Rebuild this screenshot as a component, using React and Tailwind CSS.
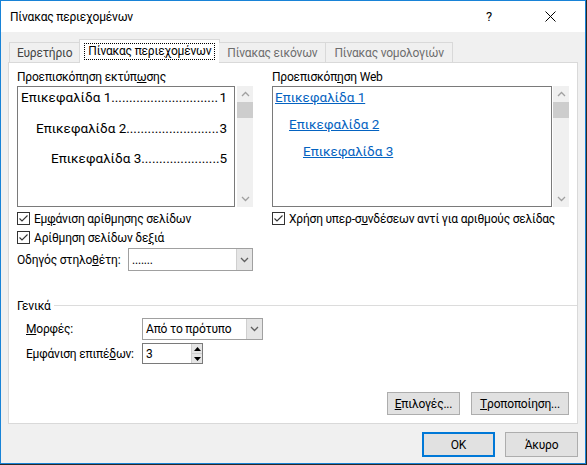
import React from "react";

const F = { fontFamily: 'Roboto, "Noto Sans", "Liberation Sans", sans-serif' };

function Check({ className = "" }) {
  return (
    <div className={"w-[13px] h-[13px] border border-[#333333] bg-white flex items-center justify-center shrink-0 " + className}>
      <svg width="11" height="11" viewBox="0 0 11 11">
        <path d="M1.5 5.5 L4 8 L9.5 2.5" fill="none" stroke="#333" strokeWidth="1.1" />
      </svg>
    </div>
  );
}

function Chevron({ up = false, color = "#a0a0a0" }) {
  return (
    <svg width="9" height="6" viewBox="0 0 9 6">
      <path d={up ? "M1 5 L4.5 1.5 L8 5" : "M1 1 L4.5 4.5 L8 1"} fill="none" stroke={color} strokeWidth="1.3" />
    </svg>
  );
}

function VScroll() {
  return (
    <div className="w-[16px] h-[121px] bg-[#f0f0f0] flex flex-col items-center shrink-0">
      <div className="h-[16px] w-full flex items-center justify-center"><Chevron up /></div>
      <div className="h-[16px] w-full bg-[#cdcdcd]" />
      <div className="flex-1" />
      <div className="h-[16px] w-full flex items-center justify-center"><Chevron /></div>
    </div>
  );
}

function Combo({ w, text, h = "h-[23px]" }) {
  return (
    <div className={"flex border border-[#a0a0a0] bg-white " + h} style={{ width: w }}>
      <div className="flex-1 flex items-center pl-[3px] text-[12px]">{text}</div>
      <div className="w-[16px] border-l border-[#cfcfcf] bg-[#e5e5e5] flex items-center justify-center">
        <Chevron color="#606060" />
      </div>
    </div>
  );
}

function Btn({ children, w = "w-[73px]", className = "" }) {
  return (
    <div className={"h-[23px] border border-[#adadad] bg-[#e1e1e1] flex items-center justify-center text-[12px] " + w + " " + className}>
      {children}
    </div>
  );
}

function Leader({ text, dots, num, pl }) {
  return (
    <div className="flex items-end justify-between text-[13.5px] leading-[18px] tracking-normal" style={{ paddingLeft: pl }}>
      <span className="whitespace-nowrap">{text}{dots}</span>
      <span>{num}</span>
    </div>
  );
}

export default function App() {
  return (
    <div className="w-[587px] h-[465px] border-r border-b border-[#2a2a2a] text-black tracking-[-0.2px]" style={F}>
      <div className="w-[586px] h-[464px] border border-[#1883d7] bg-[#f0f0f0] flex flex-col">
        {/* title bar */}
        <div className="h-[31px] bg-white flex items-center pl-[9px] text-[12px]">
          <span className="flex-1">Πίνακας περιεχομένων</span>
          <span className="text-[13px] mr-[53px]">?</span>
          <svg width="11" height="11" viewBox="0 0 11 11" className="mr-[29px]">
            <path d="M0.5 0.5 L10.5 10.5 M10.5 0.5 L0.5 10.5" stroke="#000" strokeWidth="1" />
          </svg>
        </div>

        <div className="px-[7px] flex flex-col">
          {/* tabs */}
          <div className="flex items-end h-[30px] pt-[7px] pl-[1px] text-[12px] relative z-10 whitespace-nowrap">
            <div className="h-[20px] px-[7px] border border-b-0 border-[#d9d9d9] bg-[#f0f0f0] text-[#444] flex items-center">Ευρετήριο</div>
            <div className="h-[24px] px-[4px] border border-b-0 border-[#d9d9d9] bg-white -mx-[1px] flex items-center -mb-[1px] pb-[1px]">
              <span className="border border-dotted border-black px-[3px] leading-[15px]">Πίνακας περιε<u>χ</u>ομένων</span>
            </div>
            <div className="h-[20px] px-[8px] border border-b-0 border-l-0 border-[#d9d9d9] bg-[#f0f0f0] text-[#6d6d6d] flex items-center">Πίνακας εικόνων</div>
            <div className="h-[20px] px-[8px] border border-b-0 border-l-0 border-[#d9d9d9] bg-[#f0f0f0] text-[#6d6d6d] flex items-center">Πίνακας νομολογιών</div>
          </div>

          {/* panel */}
          <div className="h-[362px] border border-[#d9d9d9] bg-white flex flex-col px-[8px] text-[12px] whitespace-nowrap">
            <div className="flex pt-[7px] h-[231px]">
              {/* left column */}
              <div className="w-[236px] flex flex-col">
                <div className="h-[16px] leading-[15px]">Προεπισκόπηση εκτύπ<u>ω</u>σης</div>
                <div className="flex gap-[2px]">
                  <div className="w-[218px] h-[121px] border border-[#7a7a7a] pt-[1px] pl-[3px] pr-[7px] flex flex-col overflow-hidden">
                    <Leader text="Επικεφαλίδα 1" dots={".".repeat(30)} num="1" pl={0} />
                    <div className="h-[13px]" />
                    <Leader text="Επικεφαλίδα 2" dots={".".repeat(26)} num="3" pl={15} />
                    <div className="h-[12px]" />
                    <Leader text="Επικεφαλίδα 3" dots={".".repeat(22)} num="5" pl={30} />
                  </div>
                  <VScroll />
                </div>
                <div className="flex items-center h-[13px] mt-[5px]">
                  <Check />
                  <span className="ml-[4px]">Εμ<u>φ</u>άνιση αρίθμησης σελίδων</span>
                </div>
                <div className="flex items-center h-[13px] mt-[6px]">
                  <Check />
                  <span className="ml-[4px]">Αρίθμηση σελίδων δε<u>ξ</u>ιά</span>
                </div>
                <div className="flex items-center mt-[4px]">
                  <span className="w-[111px]">Οδηγός στηλο<u>θ</u>έτη:</span>
                  <Combo w="125px" text="......." />
                </div>
              </div>
              {/* divider */}
              <div className="w-[1px] bg-[#a0a0a0] ml-[10px] mr-[9px]" />
              {/* right column */}
              <div className="flex-1 flex flex-col">
                <div className="h-[16px] leading-[15px]">Προεπισκόπ<u>η</u>ση Web</div>
                <div className="flex gap-[1px]">
                  <div className="w-[280px] h-[121px] border border-[#7a7a7a] pt-[1px] pl-[2px] flex flex-col text-[13.5px] leading-[18px] tracking-normal text-[#0563c1]">
                    <span className="underline self-start">Επικεφαλίδα 1</span>
                    <span className="underline ml-[14px] mt-[9px] self-start">Επικεφαλίδα 2</span>
                    <span className="underline ml-[28px] mt-[9px] self-start">Επικεφαλίδα 3</span>
                  </div>
                  <VScroll />
                </div>
                <div className="flex items-center h-[13px] mt-[5px]">
                  <Check />
                  <span className="ml-[4px]">Χρήση υπερ-σ<u>υ</u>νδέσεων αντί για αριθμούς σελίδας</span>
                </div>
              </div>
            </div>

            {/* general */}
            <div className="flex items-center mt-[4px] h-[15px] -mr-[8px]">
              <span>Γενικά</span>
              <div className="flex-1 h-[1px] bg-[#dcdcdc] ml-[3px]" />
            </div>
            <div className="flex items-center mt-[5px] pl-[9px]">
              <span className="w-[116px]"><u>Μ</u>ορφές:</span>
              <Combo w="121px" text="Από το πρότυπο" h="h-[22px]" />
            </div>
            <div className="flex items-center mt-[3px] pl-[9px]">
              <span className="w-[116px]">Εμφάνιση επιπέ<u>δ</u>ων:</span>
              <div className="w-[61px] h-[21px] border border-[#7a7a7a] flex">
                <div className="flex-1 flex items-center pl-[3px]">3</div>
                <div className="w-[11px] flex flex-col border-l border-[#cfcfcf]">
                  <div className="flex-1 bg-[#e5e5e5] border-b border-[#cfcfcf] flex items-center justify-center">
                    <svg width="7" height="4" viewBox="0 0 7 4"><path d="M0 4 L3.5 0 L7 4 Z" fill="#000" /></svg>
                  </div>
                  <div className="flex-1 bg-[#e5e5e5] flex items-center justify-center">
                    <svg width="7" height="4" viewBox="0 0 7 4"><path d="M0 0 L3.5 4 L7 0 Z" fill="#000" /></svg>
                  </div>
                </div>
              </div>
            </div>
            <div className="flex-1" />
            <div className="flex justify-end gap-[11px] mb-[8px]">
              <Btn><u>Ε</u>πιλογές...</Btn>
              <Btn w="w-[98px]"><u>Τ</u>ροποποίηση...</Btn>
            </div>
          </div>

          {/* bottom buttons */}
          <div className="flex justify-end gap-[10px] mt-[8px]">
            <div className="w-[73px] h-[25px] border-2 border-[#0078d7] bg-[#e1e1e1] flex items-center justify-center text-[12px]">OK</div>
            <div className="w-[73px] h-[25px] border border-[#adadad] bg-[#e1e1e1] flex items-center justify-center text-[12px]">Άκυρο</div>
          </div>
        </div>
      </div>
    </div>
  );
}
